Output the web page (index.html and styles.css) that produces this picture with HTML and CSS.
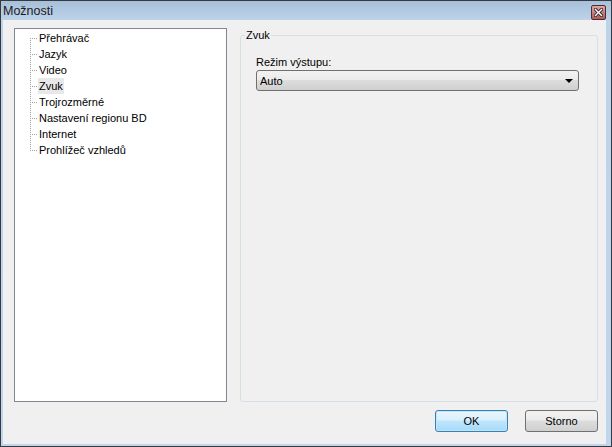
FILE: index.html
```html
<!DOCTYPE html>
<html lang="cs">
<head>
    <meta charset="UTF-8">
    <title>Možnosti</title>
    <link rel="stylesheet" href="styles.css">
</head>
<body>
    <div class="window">
        <div class="titlebar">
            <span class="title">Možnosti</span>
            <button class="close" type="button" aria-label="Zavřít">
                <svg width="9" height="9" viewBox="0 0 9 9">
                    <path d="M1.5 1.5 L7.5 7.5 M7.5 1.5 L1.5 7.5" stroke="#3b2a30" stroke-width="3.2" stroke-linecap="square"/>
                    <path d="M1.5 1.5 L7.5 7.5 M7.5 1.5 L1.5 7.5" stroke="#fff" stroke-width="1.4" stroke-linecap="square"/>
                </svg>
            </button>
        </div>
        <div class="client">
            <div class="panes">
                <ul class="tree">
                    <li><span class="twig"></span><span class="node">Přehrávač</span></li>
                    <li><span class="twig"></span><span class="node">Jazyk</span></li>
                    <li><span class="twig"></span><span class="node">Video</span></li>
                    <li><span class="twig"></span><span class="node selected">Zvuk</span></li>
                    <li><span class="twig"></span><span class="node">Trojrozměrné</span></li>
                    <li><span class="twig"></span><span class="node">Nastavení regionu BD</span></li>
                    <li><span class="twig"></span><span class="node">Internet</span></li>
                    <li><span class="twig"></span><span class="node">Prohlížeč vzhledů</span></li>
                </ul>
                <fieldset class="group">
                    <legend>Zvuk</legend>
                    <label class="field-label" for="output">Režim výstupu:</label>
                    <div class="combo" id="output">
                        <span>Auto</span>
                        <span class="arrow"></span>
                    </div>
                </fieldset>
            </div>
            <div class="buttons">
                <button class="btn default" type="button">OK</button>
                <button class="btn" type="button">Storno</button>
            </div>
        </div>
    </div>
</body>
</html>
```

FILE: styles.css
```css
body {
    margin: 0;
    font-family: 'Liberation Sans', Arial, sans-serif;
    font-size: 11px;
    color: #000;
    background: #fff;
}
.window {
    width: 612px;
    height: 447px;
    box-sizing: border-box;
    border: 1px solid #343a40;
    background: linear-gradient(#a7bfd8 0, #bcd3ea 19px, #bfd6ee 100%);
    display: flex;
    flex-direction: column;
}
.titlebar {
    height: 19px;
    display: flex;
    align-items: center;
    justify-content: space-between;
    padding: 0 5px 0 2px;
}
.title {
    font-size: 12.5px;
    color: #1b1b1b;
    margin-top: 1px;
}
.close {
    width: 15px;
    height: 15px;
    margin-top: 3px;
    padding: 0;
    border: 1px solid #4a2c36;
    border-radius: 2px;
    background: linear-gradient(#e0a5a2, #c7817d 50%, #b35c57);
    display: flex;
    align-items: center;
    justify-content: center;
}
.client {
    flex: 1;
    margin: 0 5px 2px 2px;
    background: #f0f0f0;
    padding: 8px 8px 12px 11px;
    display: flex;
    flex-direction: column;
}
.panes {
    display: flex;
    gap: 13px;
}
.tree {
    width: 213px;
    height: 374px;
    box-sizing: border-box;
    margin: 0;
    padding: 1px 0 0 15px;
    list-style: none;
    background: #fff;
    border: 1px solid #828790;
}
.tree li {
    display: flex;
    height: 16px;
    line-height: 16px;
}
.twig {
    width: 8px;
    height: 16px;
    background-image:
        repeating-linear-gradient(to bottom, #a0a0a0 0 1px, transparent 1px 2px),
        repeating-linear-gradient(to right, #a0a0a0 0 1px, transparent 1px 2px);
    background-size: 1px 16px, 8px 1px;
    background-position: 0 0, 0 8px;
    background-repeat: no-repeat;
}
.tree li:first-child .twig {
    background-size: 1px 8px, 8px 1px;
    background-position: 0 8px, 0 8px;
}
.tree li:last-child .twig {
    background-size: 1px 9px, 8px 1px;
}
.node {
    padding: 0 1px;
    color: #000;
}
.node.selected {
    background: #e8e8e8;
}
.group {
    flex: 1;
    margin: 0;
    padding: 0 18px 0 15px;
    border: 1px solid #d5dfe5;
    border-radius: 3px;
}
.group legend {
    line-height: 14px;
    padding: 0 1px;
    margin-left: -11px;
}
.field-label {
    display: block;
    line-height: 14px;
    margin-top: 13px;
}
.combo {
    margin-top: 1px;
    height: 21px;
    box-sizing: border-box;
    border: 1px solid #707070;
    border-radius: 3px;
    background: linear-gradient(#f2f2f2 0, #ebebeb 45%, #dddddd 50%, #cfcfcf 100%);
    display: flex;
    align-items: center;
    justify-content: space-between;
    padding: 0 5px 0 3px;
}
.arrow {
    width: 0;
    height: 0;
    border-left: 4px solid transparent;
    border-right: 4px solid transparent;
    border-top: 4px solid #000;
    margin-top: 1px;
}
.buttons {
    margin-top: 8px;
    display: flex;
    justify-content: flex-end;
    gap: 17px;
}
.btn {
    width: 73px;
    height: 22px;
    font-family: inherit;
    font-size: 11px;
    color: #000;
    border: 1px solid #707070;
    border-radius: 3px;
    background: linear-gradient(#f2f2f2 0, #ebebeb 45%, #dddddd 50%, #cfcfcf 100%);
    padding: 0;
}
.btn.default {
    border-color: #3c7fb1;
    background: linear-gradient(#eaf6fd 0, #d9f0fc 45%, #bee6fd 50%, #a7d9f5 100%);
    box-shadow: inset 0 0 0 1px #bfe6fb;
}
```
